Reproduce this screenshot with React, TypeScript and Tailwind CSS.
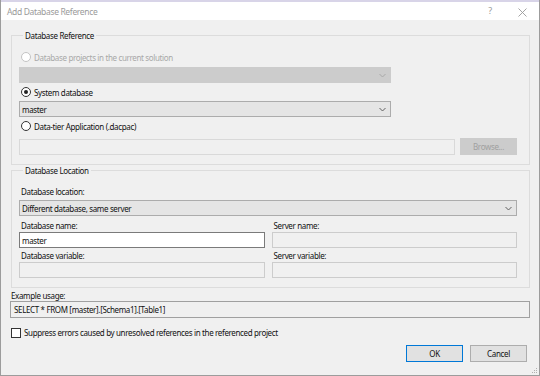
import React from "react";

const Chevron = ({ color = "#606060" }: { color?: string }) => (
  <svg width="7" height="5" viewBox="0 0 7 5" className="shrink-0">
    <path d="M0.5 1 L3.5 4 L6.5 1" fill="none" stroke={color} strokeWidth="1" />
  </svg>
);

const Radio = ({ checked, disabled, label }: { checked?: boolean; disabled?: boolean; label: string }) => (
  <div className="flex items-center h-[12px] gap-[3px] pl-[2px]">
    <div
      className={`w-[10px] h-[10px] rounded-full border bg-white flex items-center justify-center ${
        disabled ? "border-[#c4c4c4]" : "border-[#333333]"
      }`}
    >
      {checked && <div className="w-[4px] h-[4px] rounded-full bg-[#222222]" />}
    </div>
    <span className={disabled ? "text-[#a8a8a8]" : "text-[#111111]"}>{label}</span>
  </div>
);

const App = () => {
  return (
    <div
      className="w-[540px] h-[376px] flex flex-col border border-t-0 border-[#9c9c9c] bg-[#f0f0f0] text-[8px] leading-[11px] tracking-[-0.35px] overflow-hidden"
      style={{ fontFamily: '"Noto Sans", "Open Sans", sans-serif' }}
    >
      {/* title bar */}
      <div className="h-[20px] bg-white flex items-center justify-between shrink-0 border-t-2 border-[#d8d4e8]">
        <span className="pl-[6px] text-[#9a9a9a] text-[8.5px]">Add Database Reference</span>
        <div className="flex items-center text-[#9a9a9a]">
          <span className="w-[30px] text-center text-[9px]">?</span>
          <span className="w-[34px] text-center">
            <svg width="9" height="9" viewBox="0 0 9 9" className="inline">
              <path d="M0.5 0.5 L8.5 8.5 M8.5 0.5 L0.5 8.5" stroke="#9a9a9a" strokeWidth="0.9" />
            </svg>
          </span>
        </div>
      </div>

      <div className="flex-1 flex flex-col px-[9px] pt-[10px]">
        {/* Database Reference */}
        <fieldset className="border border-[#dcdcdc] ml-[1px] pl-[7px] pr-[12px] pb-[9px]">
          <legend className="ml-[4px] px-[2px] text-[#111111]">Database Reference</legend>
          <div className="mt-[10px]">
            <Radio disabled label="Database projects in the current solution" />
          </div>
          <div className="mt-[4px] w-[372px] h-[16px] bg-[#cccccc] border border-[#cccccc] flex items-center justify-end pr-[4px]">
            <Chevron color="#a8a8a8" />
          </div>
          <div className="mt-[3px]">
            <Radio checked label="System database" />
          </div>
          <div className="mt-[3px] w-[372px] h-[16px] bg-[#e5e5e5] border border-[#acacac] flex items-center justify-between pl-[2px] pr-[4px]">
            <span className="text-[#111111]">master</span>
            <Chevron />
          </div>
          <div className="mt-[3px]">
            <Radio label="Data-tier Application (.dacpac)" />
          </div>
          <div className="mt-[6px] flex items-start justify-between">
            <div className="mt-[1px] w-[436px] h-[16px] bg-[#f0f0f0] border border-[#d9d9d9]" />
            <div className="w-[57px] h-[17px] bg-[#cccccc] border border-[#cccccc] flex items-center justify-center text-[#a0a0a0]">
              Browse...
            </div>
          </div>
        </fieldset>

        {/* Database Location */}
        <fieldset className="border border-[#dcdcdc] ml-[1px] pl-[7px] pr-[12px] pb-[9px]">
          <legend className="ml-[4px] px-[2px] text-[#111111]">Database Location</legend>
          <div className="mt-[10px] pl-[2px] text-[#111111]">Database location:</div>
          <div className="mt-[3px] h-[16px] bg-[#e5e5e5] border border-[#acacac] flex items-center justify-between pl-[2px] pr-[4px]">
            <span className="text-[#111111]">Different database, same server</span>
            <Chevron />
          </div>
          <div className="mt-[4px] grid grid-cols-2 gap-x-[7px]">
            <div className="flex flex-col">
              <span className="pl-[2px] text-[#111111]">Database name:</span>
              <div className="mt-[1px] h-[16px] bg-white border border-[#7a7a7a] flex items-center pl-[2px] text-[#111111]">
                master
              </div>
              <span className="mt-[2px] pl-[2px] text-[#111111]">Database variable:</span>
              <div className="mt-[1px] h-[16px] bg-[#f0f0f0] border border-[#cccccc]" />
            </div>
            <div className="flex flex-col">
              <span className="pl-[2px] text-[#111111]">Server name:</span>
              <div className="mt-[1px] h-[16px] bg-[#f0f0f0] border border-[#cccccc]" />
              <span className="mt-[2px] pl-[2px] text-[#111111]">Server variable:</span>
              <div className="mt-[1px] h-[16px] bg-[#f0f0f0] border border-[#cccccc]" />
            </div>
          </div>
        </fieldset>

        <div className="mt-[2px] pl-[1px] text-[#111111]">Example usage:</div>
        <div className="mt-[0px] h-[17px] bg-[#f0f0f0] border border-[#a0a0a0] flex items-center pl-[3px] text-[#111111]">
          SELECT * FROM [master].[Schema1].[Table1]
        </div>

        <div className="mt-[9px] flex items-center gap-[3px] pl-[1px]">
          <div className="w-[10px] h-[10px] border border-[#333333] bg-white" />
          <span className="text-[#111111]">Suppress errors caused by unresolved references in the referenced project</span>
        </div>

        <div className="mt-[7px] flex justify-end gap-[7px] pr-[3px]">
          <div className="w-[57px] h-[17px] bg-[#e1e1e1] border border-[#0078d7] flex items-center justify-center text-[#111111]">
            OK
          </div>
          <div className="w-[57px] h-[17px] bg-[#e1e1e1] border border-[#adadad] flex items-center justify-center text-[#111111]">
            Cancel
          </div>
        </div>

        <div className="flex-1 flex items-end justify-end pb-[1px] -mr-[8px]">
          <svg width="6" height="6" viewBox="0 0 6 6">
            <rect x="4" y="0" width="1" height="1" fill="#b0b0b0" />
            <rect x="2" y="2" width="1" height="1" fill="#b0b0b0" />
            <rect x="4" y="2" width="1" height="1" fill="#b0b0b0" />
            <rect x="0" y="4" width="1" height="1" fill="#b0b0b0" />
            <rect x="2" y="4" width="1" height="1" fill="#b0b0b0" />
            <rect x="4" y="4" width="1" height="1" fill="#b0b0b0" />
          </svg>
        </div>
      </div>
    </div>
  );
};

export default App;
